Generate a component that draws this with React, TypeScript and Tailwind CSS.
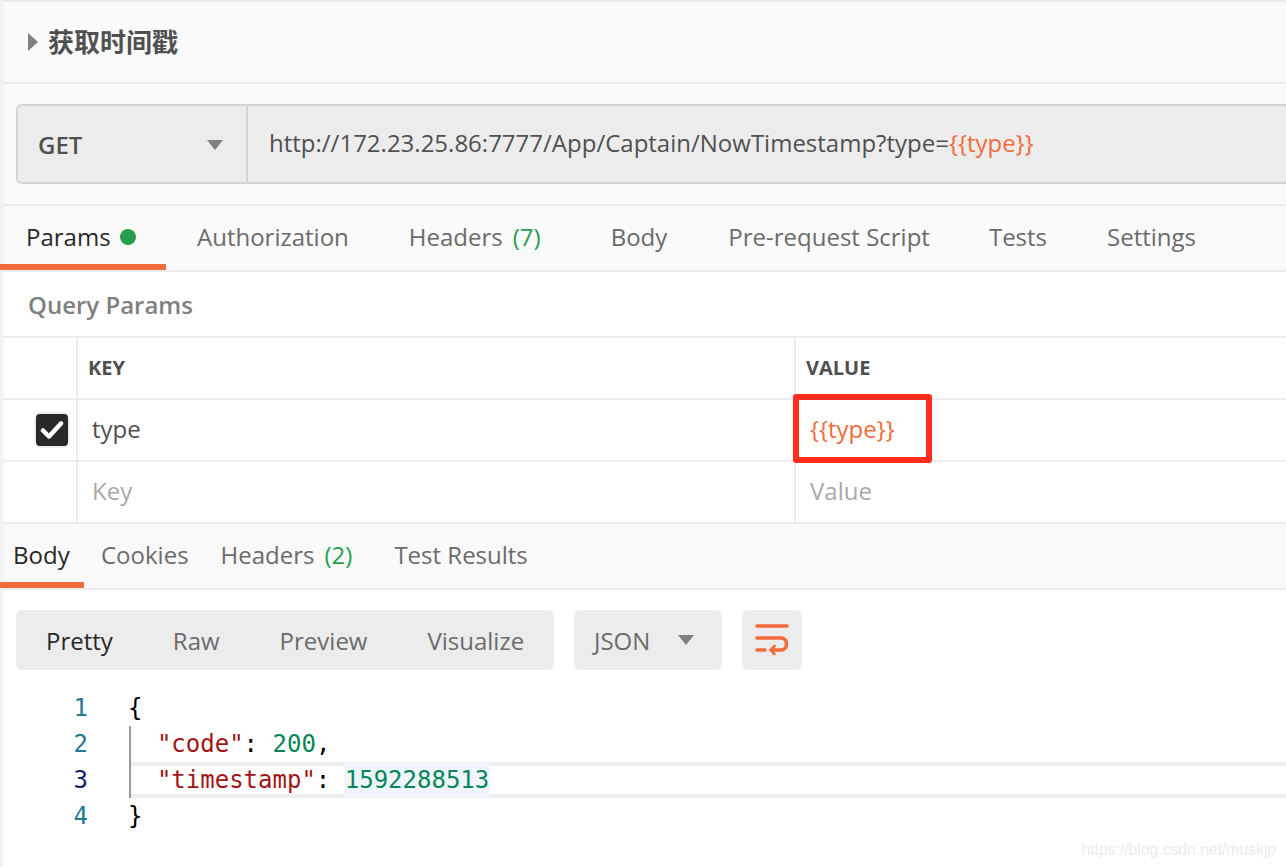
import type { ReactNode } from 'react'

const sans = 'font-["Open_Sans","Noto_Sans_CJK_SC",sans-serif]'

function Tab({ children, active, className }: { children: ReactNode; active?: boolean; className: string }) {
  return (
    <div className={`relative flex h-full items-center pb-[2px] text-[24px] ${active ? 'text-[#282828]' : 'text-[#6b6b6b]'} ${className}`}>
      {children}
      {active && <div className="absolute bottom-0 left-0 right-0 z-10 h-[6px] bg-[#f26b3a]" />}
    </div>
  )
}

function Caret({ className }: { className: string }) {
  return (
    <svg width="16" height="10" viewBox="0 0 16 10" className={className}>
      <path d="M0 0h16L8 10z" fill="#808080" />
    </svg>
  )
}

function WrapIcon() {
  return (
    <svg width="34" height="32" viewBox="0 0 34 32" fill="none" stroke="#f26b3a" strokeWidth="3.6" strokeLinecap="round">
      <path d="M2 2h30" />
      <path d="M2 14h24c3.500 0 5.500 2.700 5.500 6s-2 6-5.500 6h-8" />
      <path d="M2 26h8" />
      <path d="M19.500 22l-4 4 4 4" strokeWidth="2.600" />
    </svg>
  )
}

function TableRow({ check, left, right }: { check?: boolean; left: ReactNode; right: ReactNode }) {
  return (
    <div className="flex h-[62px] border-b-2 border-[#ececec] text-[24px]">
      <div className="flex w-[78px] shrink-0 items-center justify-end border-r-2 border-[#ececec] pr-[8px]">
        {check && (
          <div className="flex h-[32px] w-[32px] items-center justify-center rounded-[4px] bg-[#282828] shadow-[0_0_0_2px_#eeeeee]">
            <svg width="24" height="20" viewBox="0 0 24 20" fill="none" stroke="#ffffff" strokeWidth="4.500" strokeLinecap="round" strokeLinejoin="round">
              <path d="M3 10.500l6 6L21 3.500" />
            </svg>
          </div>
        )}
      </div>
      <div className="flex w-[718px] shrink-0 items-center border-r-2 border-[#ececec] pl-[14px]">{left}</div>
      <div className="flex flex-1 items-center pl-[14px]">{right}</div>
    </div>
  )
}

function CodeLine({ n, color, children }: { n: number; color: string; children: ReactNode }) {
  return (
    <div className="flex h-[36px] items-center">
      <div className={`w-[88px] shrink-0 text-right ${color}`}>{n}</div>
      <div className="whitespace-pre pl-[40px]">{children}</div>
    </div>
  )
}

export default function App() {
  return (
    <div className={`relative h-[867px] w-[1286px] overflow-hidden bg-white ${sans}`}>
      {/* header */}
      <div className="flex h-[84px] items-center gap-[10px] border-y-2 border-[#ececec] bg-[#fafafa] pl-[28px]">
        <svg width="10" height="18" viewBox="0 0 10 18">
          <path d="M0 0l10 9-10 9z" fill="#808080" />
        </svg>
        <span className="text-[26px] font-bold text-[#505050]">获取时间戳</span>
      </div>

      {/* url bar */}
      <div className="h-[122px] border-b-2 border-[#ececec] bg-[#fafafa] pl-[16px] pt-[20px]">
        <div className="flex h-[80px] rounded-l-[6px] border-2 border-r-0 border-[#d4d4d4] bg-[#ececec]">
          <div className="flex w-[230px] shrink-0 items-center justify-between border-r-2 border-[#d4d4d4] pl-[20px] pr-[23px]">
            <span className="mt-[2px] text-[24px] font-semibold text-[#505050]">GET</span>
            <Caret className="mt-[2px]" />
          </div>
          <div className="flex items-center pb-[2px] pl-[21px] text-[24px] text-[#505050]">
            http://172.23.25.86:7777/App/Captain/NowTimestamp?type=
            <span className="text-[#f26b3a]">{'{{type}}'}</span>
          </div>
        </div>
      </div>

      {/* request tabs */}
      <div className="flex h-[66px] border-b-2 border-[#ececec] bg-[#fafafa]">
        <Tab active className="w-[166px] gap-[9px] pl-[26px]">
          Params
          <span className="h-[16px] w-[16px] rounded-full bg-[#26a04f]" />
        </Tab>
        <Tab className="ml-[31px]">Authorization</Tab>
        <Tab className="ml-[60px]">
          Headers
          <span className="ml-[10px] text-[#26a04f]">(7)</span>
        </Tab>
        <Tab className="ml-[70px]">Body</Tab>
        <Tab className="ml-[61px]">Pre-request Script</Tab>
        <Tab className="ml-[59px]">Tests</Tab>
        <Tab className="ml-[60px]">Settings</Tab>
      </div>

      <div className="flex h-[66px] items-center border-b-2 border-[#ececec] pl-[28px] pt-[2px] text-[24px] font-semibold text-[#808080]">
        Query Params
      </div>

      {/* params table */}
      <div className="relative">
        <TableRow
          left={<span className="ml-[-4px] text-[20px] font-bold text-[#505050]">KEY</span>}
          right={<span className="ml-[-4px] text-[20px] font-bold text-[#505050]">VALUE</span>}
        />
        <TableRow
          check
          left={<span className="mb-[2px] text-[#505050]">type</span>}
          right={<span className="mb-[2px] text-[#f26b3a]">{'{{type}}'}</span>}
        />
        <TableRow
          left={<span className="mb-[2px] text-[#a9a9a9]">Key</span>}
          right={<span className="mb-[2px] text-[#a9a9a9]">Value</span>}
        />
        {/* annotation */}
        <div className="absolute left-[793px] top-[56px] h-[69px] w-[139px] rounded-[3px] border-[6px] border-[#ff2d1c]" />
      </div>

      {/* response tabs */}
      <div className="flex h-[66px] border-b-2 border-[#ececec] bg-[#f9f9f9]">
        <Tab active className="w-[84px] pl-[13px]">Body</Tab>
        <Tab className="ml-[17px]">Cookies</Tab>
        <Tab className="ml-[32px]">
          Headers
          <span className="ml-[10px] text-[#26a04f]">(2)</span>
        </Tab>
        <Tab className="ml-[42px]">Test Results</Tab>
      </div>

      {/* response toolbar */}
      <div className="flex items-start pl-[16px] pt-[20px] text-[24px] text-[#6b6b6b]">
        <div className="flex h-[60px] w-[538px] items-center rounded-[6px] bg-[#ececec] pt-[2px]">
          <span className="ml-[30px] text-[#282828]">Pretty</span>
          <span className="ml-[60px]">Raw</span>
          <span className="ml-[60px]">Preview</span>
          <span className="ml-[60px]">Visualize</span>
        </div>
        <div className="ml-[20px] flex h-[60px] w-[148px] items-center rounded-[6px] bg-[#ececec] pl-[20px] pt-[2px]">
          JSON
          <Caret className="ml-[28px] mb-[2px]" />
        </div>
        <div className="ml-[20px] flex h-[60px] w-[60px] items-center justify-center rounded-[6px] bg-[#ececec]">
          <WrapIcon />
        </div>
      </div>

      {/* response body */}
      <div className='relative mt-[20px] font-["DejaVu_Sans_Mono",monospace] text-[24px] text-black'>
        <div className="absolute left-[129px] top-[36px] h-[72px] w-[2px] bg-[#999999]" />
        <div className="absolute left-[131px] right-0 top-[72px] h-[36px] border-y-4 border-[#eeeeee]" />
        <div className="absolute left-[344px] top-[72px] h-[36px] w-[146px] bg-[#eff5fb]" />
        <div className="relative">
          <CodeLine n={1} color="text-[#237893]">{'{'}</CodeLine>
          <CodeLine n={2} color="text-[#237893]">
            {'  '}
            <span className="text-[#a31515]">"code"</span>: <span className="text-[#098658]">200</span>,
          </CodeLine>
          <CodeLine n={3} color="text-[#0b216f]">
            {'  '}
            <span className="text-[#a31515]">"timestamp"</span>: <span className="text-[#098658]">1592288513</span>
          </CodeLine>
          <CodeLine n={4} color="text-[#237893]">{'}'}</CodeLine>
        </div>
      </div>

      {/* left window edge shade */}
      <div className="absolute inset-y-0 left-0 w-[6px] bg-gradient-to-r from-[#f0f0f0] to-transparent" />

      {/* watermark */}
      <div className='absolute bottom-[5px] right-[10px] font-["Liberation_Sans",sans-serif] text-[15.700px] text-[#ececec]'>
        https://blog.csdn.net/muskjp
      </div>
    </div>
  )
}
